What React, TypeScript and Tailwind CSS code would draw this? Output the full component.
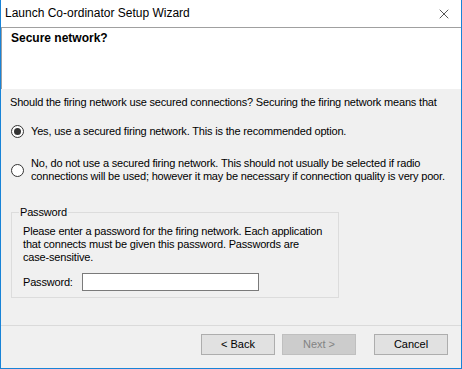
import { X } from "lucide-react";

// ── Small pieces ───────────────────────────────────────────────────

function Radio({ checked }: { checked?: boolean }) {
  return (
    <span className="flex h-[13px] w-[13px] shrink-0 items-center justify-center rounded-full border border-[#333333] bg-white">
      {checked && <span className="h-[7px] w-[7px] rounded-full bg-[#333333]" />}
    </span>
  );
}

function WizButton({ label, disabled }: { label: string; disabled?: boolean }) {
  return (
    <button
      disabled={disabled}
      className={
        disabled
          ? "flex h-[21px] w-[74px] items-center justify-center border border-[#bfbfbf] bg-[#cccccc] text-[#838383]"
          : "flex h-[21px] w-[74px] items-center justify-center border border-[#adadad] bg-[#e1e1e1] text-black"
      }
    >
      {label}
    </button>
  );
}

// ── Component ──────────────────────────────────────────────────────

export default function App() {
  return (
    <div
      className="flex h-[369px] w-[462px] flex-col border-x border-b border-[#1883d7] bg-[#f0f0f0] text-[11px] leading-[13px] text-black"
      style={{ fontFamily: '"Liberation Sans", Arial, sans-serif' }}
    >
      {/* Title bar */}
      <div className="flex h-[27px] shrink-0 items-center justify-between bg-white pl-[4px] pr-[9px]">
        <span className="text-[12px]">Launch Co-ordinator Setup Wizard</span>
        <X size={16} strokeWidth={1} className="text-black" />
      </div>

      {/* Header */}
      <div className="h-[62px] shrink-0 border-l border-t border-[#a0a0a0] bg-white px-[9px] pt-[4px]">
        <span className="text-[12px] font-bold">Secure network?</span>
      </div>

      {/* Body */}
      <div className="flex flex-1 flex-col px-[9px] pt-[7px] tracking-[-0.18px]">
        <p>Should the firing network use secured connections? Securing the firing network means that</p>

        <div className="mt-[16px] flex items-center gap-[7px] pl-[1px]">
          <Radio checked />
          <span>Yes, use a secured firing network. This is the recommended option.</span>
        </div>

        <div className="mt-[19px] flex items-center gap-[7px] pl-[1px]">
          <Radio />
          <span>
            No, do not use a secured firing network. This should not usually be selected if radio
            <br />
            connections will be used; however it may be necessary if connection quality is very poor.
          </span>
        </div>

        {/* Password group */}
        <div className="relative mt-[29px] ml-[1px] h-[86px] w-[328px] border border-[#dcdcdc] px-[11px] pt-[12px]">
          <span className="absolute -top-[7px] left-[7px] bg-[#f0f0f0] px-[1px]">Password</span>
          <p>
            Please enter a password for the firing network. Each application
            <br />
            that connects must be given this password. Passwords are
            <br />
            case-sensitive.
          </p>
          <div className="mt-[9px] flex items-center">
            <span className="w-[59px]">Password:</span>
            <input
              type="password"
              className="h-[18px] w-[177px] border border-[#7a7a7a] bg-white outline-none"
            />
          </div>
        </div>
      </div>

      {/* Footer */}
      <div className="flex h-[43px] shrink-0 items-start justify-end gap-[7px] border-t border-[#dadada] pr-[13px] pt-[8px]">
        <WizButton label="< Back" />
        <WizButton label="Next >" disabled />
        <div className="w-[4px]" />
        <WizButton label="Cancel" />
      </div>
    </div>
  );
}
